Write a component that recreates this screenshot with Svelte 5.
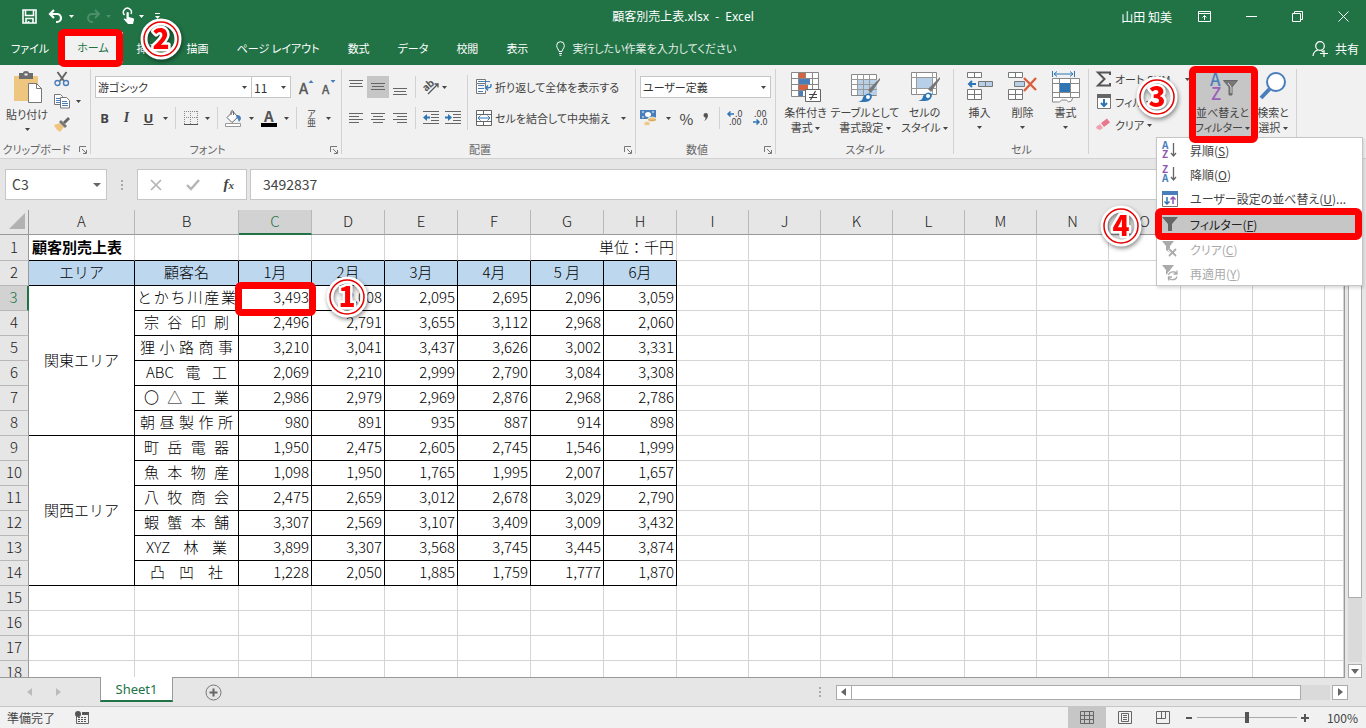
<script>
  const months = ['1月', '2月', '3月', '4月', '5 月', '6月'];
  const columns = 'ABCDEFGHIJKLMNOPQ'.split('');
  const spare = columns.slice(8);
  const customers = [
    ['とかち川産業', 'six', ['3,493', '2,008', '2,095', '2,695', '2,096', '3,059']],
    ['宗谷印刷', 'four', ['2,496', '2,791', '3,655', '3,112', '2,968', '2,060']],
    ['狸小路商事', 'five', ['3,210', '3,041', '3,437', '3,626', '3,002', '3,331']],
    ['ABC電工', 'mixed', ['2,069', '2,210', '2,999', '2,790', '3,084', '3,308']],
    ['〇△工業', 'four', ['2,986', '2,979', '2,969', '2,876', '2,968', '2,786']],
    ['朝昼製作所', 'five', ['980', '891', '935', '887', '914', '898']],
    ['町岳電器', 'four', ['1,950', '2,475', '2,605', '2,745', '1,546', '1,999']],
    ['魚本物産', 'four', ['1,098', '1,950', '1,765', '1,995', '2,007', '1,657']],
    ['八牧商会', 'four', ['2,475', '2,659', '3,012', '2,678', '3,029', '2,790']],
    ['蝦蟹本舗', 'four', ['3,307', '2,569', '3,107', '3,409', '3,009', '3,432']],
    ['XYZ林業', 'mixed', ['3,899', '3,307', '3,568', '3,745', '3,445', '3,874']],
    ['凸凹社', 'three', ['1,228', '2,050', '1,885', '1,759', '1,777', '1,870']]
  ];
  const areas = { 0: '関東エリア', 6: '関西エリア' };
  const blankRows = [15, 16, 17, 18];
  let formula = $state('3492837');
  let zoom = $state(50);
</script>

{#snippet caret()}
  <svg class="caret" width="5" height="3" viewBox="0 0 5 3" aria-hidden="true"><path d="M0 0h5L2.500 3z" fill="currentColor" /></svg>
{/snippet}

{#snippet badge(n, where)}
  <svg class="badge {where}" width="48" height="48" viewBox="0 0 48 48" aria-hidden="true">
    <circle cx="24" cy="24" r="17" fill="none" stroke="#fff" stroke-width="7" />
    <circle cx="24" cy="24" r="17" fill="none" stroke="#e60000" stroke-width="1.500" />
    <text x="24" y="34" text-anchor="middle">{n}</text>
  </svg>
{/snippet}

{#snippet launcher()}
  <svg class="launcher" width="8" height="8" viewBox="0 0 8 8" aria-hidden="true"><path d="M.5 6V.5H7M3 3l4 4M7.500 4v3.500H4" fill="none" stroke="#777" /></svg>
{/snippet}

{#snippet lines(rows)}
  <svg width="16" height="16" viewBox="0 0 16 16" aria-hidden="true">
    {#each rows as [x, y, w]}<path d="M{x} {y + 0.5}h{w}" stroke="#666" />{/each}
  </svg>
{/snippet}

{#snippet sortIcon(top, bottom, topColor, bottomColor)}
  <svg width="16" height="18" viewBox="0 0 16 18" aria-hidden="true">
    <text x="0" y="8" font-size="10" font-weight="700" fill={topColor}>{top}</text>
    <text x="0" y="17" font-size="10" font-weight="700" fill={bottomColor}>{bottom}</text>
    <path d="M11.500 2v13M9 12l2.500 3L14 12" fill="none" stroke="#666" stroke-width="1.300" />
  </svg>
{/snippet}

<div class="app">
  <header class="green">
    <div class="title">
      <div class="quick">
        <button aria-label="上書き保存"><svg width="15" height="15" viewBox="0 0 15 15"><path d="M1 1h13v13H1zM3.500 1v5.500h8V1M4 14v-4.500h7V14M6.500 14v-2" fill="none" stroke="#fff" stroke-width="1.600" /></svg></button>
        <button aria-label="元に戻す"><svg width="16" height="14" viewBox="0 0 16 14"><path d="M6 1L2 5l4 4M2 5h7a4 4 0 0 1 0 8H8" fill="none" stroke="#fff" stroke-width="2.200" /></svg>{@render caret()}</button>
        <button class="dim" aria-label="やり直し"><svg width="16" height="14" viewBox="0 0 16 14"><path d="M10 1l4 4-4 4M14 5H7a4 4 0 0 0 0 8h1" fill="none" stroke="#4d8f6a" stroke-width="2" /></svg>{@render caret()}</button>
        <button aria-label="タッチ/マウス モード"><svg width="12" height="17" viewBox="0 0 12 17"><path d="M2.500 7A4 4 0 1 1 9 6" fill="none" stroke="#fff" stroke-width="1.500" /><path d="M4.500 4.500q1.200-1.200 2.300 0V9l4.500 1.200q1 .4.700 1.500L11 16H6L1.500 11q.8-1.300 3 .3z" fill="#fff" /></svg>{@render caret()}</button>
        <button aria-label="ユーザー設定"><svg width="5" height="7" viewBox="0 0 5 7"><path d="M0 .5h5" stroke="#fff" /><path d="M0 3h5L2.500 6z" fill="#fff" /></svg></button>
      </div>
      <h1>顧客別売上表.xlsx&nbsp; -&nbsp; Excel</h1>
      <div class="window">
        <span>山田 知美</span>
        <button aria-label="リボンの表示オプション"><svg width="13" height="11" viewBox="0 0 13 11"><path d="M.5.5h12v10H.500zM.5 2.500h12M6.500 9V4.500M4.500 6.500l2-2 2 2" fill="none" stroke="#fff" /></svg></button>
        <button aria-label="最小化"><svg width="11" height="11" viewBox="0 0 11 11"><path d="M0 5.500h11" stroke="#fff" /></svg></button>
        <button aria-label="元に戻す (縮小)"><svg width="11" height="11" viewBox="0 0 11 11"><path d="M.5 2.500h8v8h-8zM2.500 2V.5h8v8H9" fill="none" stroke="#fff" /></svg></button>
        <button aria-label="閉じる"><svg width="11" height="11" viewBox="0 0 11 11"><path d="M.5.500l10 10M10.500.5l-10 10" fill="none" stroke="#fff" /></svg></button>
      </div>
    </div>
    <nav class="tabs">
      <button>ファイル</button>
      <button class="active">ホーム<i class="frame tab-frame"></i></button>
      <button>挿入{@render badge(2, 'on-tab')}</button>
      <button>描画</button>
      <button>ページ レイアウト</button>
      <button>数式</button>
      <button>データ</button>
      <button>校閲</button>
      <button>表示</button>
      <button class="tell"><svg width="9" height="15" viewBox="0 0 9 15"><path d="M3 10.500C3 8.500.7 7.500.7 4.500a3.800 3.800 0 0 1 7.600 0c0 3-2.300 4-2.300 6zM3 12.500h3M3.500 14.300h2" fill="none" stroke="#fff" /></svg>実行したい作業を入力してください</button>
      <button class="share"><svg width="17" height="16" viewBox="0 0 17 16"><circle cx="8" cy="5" r="4.300" fill="none" stroke="#fff" stroke-width="1.200" /><path d="M1 15q.5-5 5-6M9.500 9.500l1.500 1.500M8 12.500h8M12 9v7" fill="none" stroke="#fff" stroke-width="1.200" /></svg>共有</button>
    </nav>
  </header>

  <div class="ribbon">
    <section class="group clipboard">
      <div class="body">
        <button class="big"><svg width="32" height="34" viewBox="0 0 32 34"><path d="M3 5h24v25H3z" fill="#eec67f" /><path d="M8 2h4q0-2 3-2t3 2h4v6H8z" fill="#6d6d6d" /><path d="M13.500 2.500h3v2h-3z" fill="#f1f1f1" /><path d="M17.500 12.500h8l5 5v14h-13z" fill="#fff" stroke="#777" /><path d="M25.500 12.500v5h5" fill="none" stroke="#777" /></svg><span>貼り付け</span>{@render caret()}</button>
        <div class="stack">
          <button class="small" aria-label="切り取り"><svg width="16" height="16" viewBox="0 0 16 16"><path d="M3.500 1l6.500 9M12.500 1L6 10" stroke="#666" stroke-width="2" /><circle cx="3.500" cy="12" r="2.500" fill="none" stroke="#4a7ebb" stroke-width="1.400" /><circle cx="12" cy="12" r="2.500" fill="none" stroke="#4a7ebb" stroke-width="1.400" /></svg></button>
          <button class="small" aria-label="コピー"><svg width="16" height="15" viewBox="0 0 16 15"><path d="M.5.500h6l2 2v8h-8z" fill="#fff" stroke="#777" /><path d="M2 4.500h4M2 6.500h4M2 8.500h4" stroke="#4a7ebb" /><path d="M6.500 3.500h6l3 3v7.500h-9z" fill="#fff" stroke="#777" /><path d="M8 7.500h5M8 9.500h6M8 11.500h6" stroke="#4a7ebb" /></svg>{@render caret()}</button>
          <button class="small" aria-label="書式のコピー/貼り付け"><svg width="16" height="15" viewBox="0 0 16 15"><path d="M0 8l6-2 4 4-4 5q-4-2-6-7z" fill="#eec67f" /><path d="M5 5l2-2 6 6-2 2z" fill="#777" /><path d="M9 5l5-5 2 2-5 5z" fill="#666" /></svg></button>
        </div>
      </div>
      <footer>クリップボード{@render launcher()}</footer>
    </section>

    <section class="group font">
      <div class="body rows">
        <div class="row">
          <label class="combo family"><select aria-label="フォント"><option>游ゴシック</option></select>{@render caret()}</label>
          <label class="combo size"><select aria-label="フォント サイズ"><option>11</option></select>{@render caret()}</label>
          <button class="grow" aria-label="フォント サイズの拡大"><svg width="15" height="17" viewBox="0 0 15 17"><text x="0" y="15" font-size="15" fill="#555" stroke="#555" stroke-width=".4">A</text><path d="M9.500 4h5L12 1z" fill="#4a7ebb" /></svg></button>
          <button class="grow" aria-label="フォント サイズの縮小"><svg width="15" height="17" viewBox="0 0 15 17"><text x="0" y="15" font-size="12" fill="#555" stroke="#555" stroke-width=".4">A</text><path d="M8.500 1h5L11 4z" fill="#4a7ebb" /></svg></button>
        </div>
        <div class="row marks">
          <button class="glyph"><b>B</b></button>
          <button class="glyph"><i>I</i></button>
          <button class="glyph"><u>U</u></button>{@render caret()}
          <hr />
          <button aria-label="罫線"><svg width="14" height="14" viewBox="0 0 14 14"><path d="M0 .5h14M.5 0v13M13.500 0v13M6.500 0v13M0 6.500h14" stroke="#888" stroke-dasharray="1 1" /><path d="M0 13.500h14" stroke="#555" /></svg></button>{@render caret()}
          <hr />
          <button aria-label="塗りつぶしの色"><svg width="17" height="17" viewBox="0 0 17 17"><path d="M2 7.500l6-6L13 7l-6 5.500z" fill="#fff" stroke="#666" /><path d="M6 5V1.500q1-2 2.500 0V5" fill="none" stroke="#666" /><path d="M12 5q4 0 4 4l-2 3q-1-4-3-5z" fill="#4a7ebb" /><path d="M.5 13.500h15v3H.500z" fill="#fff" stroke="#999" /></svg></button>{@render caret()}
          <button aria-label="フォントの色"><svg width="16" height="17" viewBox="0 0 16 17"><text x="3" y="12" font-size="15" font-weight="700" fill="#555">A</text><path d="M0 13h16v4H0z" fill="#000" /></svg></button>{@render caret()}
          <hr />
          <button class="ruby" aria-label="ふりがなの表示"><span>ア</span><span>亜</span></button>{@render caret()}
        </div>
      </div>
      <footer>フォント{@render launcher()}</footer>
    </section>

    <section class="group align">
      <div class="body">
        <div class="rows">
          <div class="row icons">
            <button aria-label="上揃え">{@render lines([[1, 1, 14], [2, 4, 12], [1, 7, 14]])}</button>
            <button class="on" aria-label="上下中央揃え">{@render lines([[1, 4, 14], [2, 7, 12], [1, 10, 14]])}</button>
            <button aria-label="下揃え">{@render lines([[1, 9, 14], [2, 12, 12], [1, 15, 14]])}</button>
            <hr />
            <button aria-label="方向"><svg width="17" height="16" viewBox="0 0 17 16"><text x="1" y="10" font-size="10" font-weight="700" fill="#555" transform="rotate(-42 6 9)">ab</text><path d="M5 15L15 5M11.500 5H15v3.500" fill="none" stroke="#555" stroke-width="1.300" /></svg></button>{@render caret()}
          </div>
          <div class="row icons">
            <button aria-label="左揃え">{@render lines([[1, 3, 14], [1, 6, 10], [1, 9, 14], [1, 12, 10]])}</button>
            <button aria-label="中央揃え">{@render lines([[1, 3, 14], [3, 6, 10], [1, 9, 14], [3, 12, 10]])}</button>
            <button aria-label="右揃え">{@render lines([[1, 3, 14], [5, 6, 10], [1, 9, 14], [5, 12, 10]])}</button>
            <hr />
            <button aria-label="インデントを減らす"><svg width="17" height="14" viewBox="0 0 17 14"><path d="M0 .5h16M8 3.500h8M8 6.500h8M8 9.500h8M0 12.500h16" stroke="#666" /><path d="M0 6.500L4 3v2.500h3v2H4V10z" fill="#2e75b6" /></svg></button>
            <button aria-label="インデントを増やす"><svg width="17" height="14" viewBox="0 0 17 14"><path d="M0 .5h16M8 3.500h8M8 6.500h8M8 9.500h8M0 12.500h16" stroke="#666" /><path d="M7 6.500L3 3v2.500H0v2h3V10z" fill="#2e75b6" /></svg></button>
          </div>
        </div>
        <hr class="tall" />
        <div class="rows wide">
          <button class="item"><svg width="16" height="16" viewBox="0 0 16 16"><path d="M.5.500h9v4h-9zM.5 4.500v10h9v-3M9.500 4.500V8" fill="#fff" stroke="#777" /><path d="M2 2.500h12M2 6.500h6M2 9.500h6M2 12.500h5" stroke="#4a7ebb" /><path d="M15 5v2q0 2-5 2M12 6.500L9.500 9l2.500 2.500" fill="none" stroke="#2e75b6" stroke-width="1.300" /></svg>折り返して全体を表示する</button>
          <button class="item"><svg width="16" height="16" viewBox="0 0 16 16"><path d="M.5.500h15v15H.500zM.5 4.500h15M.5 11.500h15M7.500.5v4M7.500 11.500v4" fill="#fff" stroke="#666" /><path d="M2 8h12M4.500 5.500L2 8l2.500 2.500M11.500 5.500L14 8l-2.500 2.500" fill="none" stroke="#2e75b6" /></svg>セルを結合して中央揃え<span class="end">{@render caret()}</span></button>
        </div>
      </div>
      <footer>配置{@render launcher()}</footer>
    </section>

    <section class="group number">
      <div class="body rows">
        <div class="row"><label class="combo format"><select aria-label="表示形式"><option>ユーザー定義</option></select>{@render caret()}</label></div>
        <div class="row nums">
          <button aria-label="通貨表示形式"><svg width="17" height="16" viewBox="0 0 17 16"><path d="M0 0h16v9H0z" fill="#4a7ebb" /><ellipse cx="8" cy="4.500" rx="3" ry="2.500" fill="#fff" /><path d="M2 2h2M12 2h2M2 7h2" stroke="#fff" /><path d="M8 8q4-2 8 0v3q-4 2-8 0zM4 12q3-1 6 0v3q-3 1-6 0z" fill="#eec67f" stroke="#f1f1f1" stroke-width=".8" /><path d="M8 9.700q4 1.500 8 0" fill="none" stroke="#d0a050" /></svg></button>{@render caret()}
          <button class="percent">%</button>
          <button aria-label="桁区切りスタイル"><svg width="8" height="12" viewBox="0 0 8 12"><path d="M2 1.500q4-2 4 2.500-1 4-4 5 2-2 1.500-3.500-3-.5-1.500-4z" fill="#555" /></svg></button>
          <hr />
          <button aria-label="小数点以下の表示桁数を増やす"><svg width="16" height="16" viewBox="0 0 16 16"><text x="7" y="7" font-size="9" fill="#444">.0</text><text x="1" y="15" font-size="9" fill="#444">.00</text><path d="M6 4H0M2.500 1.500L0 4l2.500 2.500" fill="none" stroke="#2e75b6" stroke-width="1.500" /></svg></button>
          <button aria-label="小数点以下の表示桁数を減らす"><svg width="16" height="16" viewBox="0 0 16 16"><text x="1" y="7" font-size="9" fill="#444">.00</text><text x="7" y="15" font-size="9" fill="#444">.0</text><path d="M0 12h6M3.500 9.500L6 12l-2.500 2.500" fill="none" stroke="#2e75b6" stroke-width="1.500" /></svg></button>
        </div>
      </div>
      <footer>数値{@render launcher()}</footer>
    </section>

    <section class="group styles">
      <div class="body">
        <button class="big"><svg width="32" height="32" viewBox="0 0 32 32"><path d="M1.500 1.500h27v24h-27z" fill="#fff" stroke="#888" /><path d="M8.500 1v24M22.500 1v24M1 7.500h28M1 13.500h28M1 19.500h28M15.500 1v24" stroke="#888" /><path d="M9 2h6v5H9zM9 14h9v5H9z" fill="#d9603f" /><path d="M9 8h11v5H9zM9 20h4v5H9z" fill="#4a7ebb" /><path d="M15.500 18.500h15v12h-15z" fill="#fff" stroke="#666" /><path d="M19 23.500h8M19 26.500h8M25.500 20l-5 9" stroke="#444" stroke-width="1.200" /></svg><span>条件付き</span><span>書式 {@render caret()}</span></button>
        <button class="big"><svg width="32" height="32" viewBox="0 0 32 32"><path d="M2.500 3.500h25v21h-25z" fill="#fff" stroke="#888" /><path d="M9 9h19v15H9z" fill="#b8cfe8" /><path d="M8.500 3v21M14.500 3v21M20.500 3v21M2 8.500h26M2 13.500h26M2 18.500h26" stroke="#999" /><path d="M31 9l-9 13-3-3L31 7z" fill="#777" /><path d="M9 31q5-1 5-5 5-6 9-2 0 7-7 7z" fill="#2e75b6" /><circle cx="19" cy="26" r="2" fill="#fff" /></svg><span>テーブルとして</span><span>書式設定 {@render caret()}</span></button>
        <button class="big"><svg width="32" height="32" viewBox="0 0 32 32"><path d="M2.500 1.500h25v22h-25z" fill="#fff" stroke="#888" /><path d="M7.500 1v23M23.500 1v23M2 6.500h26M2 17.500h26" stroke="#999" /><path d="M8 7h15v10H8z" fill="#b8cfe8" /><path d="M31 8l-9 13-3-3L31 6z" fill="#777" /><path d="M9 30q5-1 5-5 5-6 9-2 0 7-7 7z" fill="#2e75b6" /><circle cx="19" cy="25" r="2" fill="#fff" /></svg><span>セルの</span><span>スタイル {@render caret()}</span></button>
      </div>
      <footer>スタイル</footer>
    </section>

    <section class="group cells">
      <div class="body">
        <button class="big"><svg width="28" height="32" viewBox="0 0 28 32"><path d="M1.500 1.500h14v5h-14zM8.500 1.500v5M1.500 18.500h14v10h-14zM8.500 18.500v10M1.500 23.500h14" fill="#fff" stroke="#777" /><path d="M12.500 10.500h14v5h-14z" fill="#b8cfe8" stroke="#777" /><path d="M19.500 10.500v5" stroke="#777" /><path d="M10 13H3M6 10l-3 3 3 3" fill="none" stroke="#2e75b6" stroke-width="2" /></svg><span>挿入</span>{@render caret()}</button>
        <button class="big"><svg width="32" height="32" viewBox="0 0 32 32"><path d="M1.500 1.500h14v5h-14zM8.500 1.500v5M1.500 18.500h14v10h-14zM8.500 18.500v10M1.500 23.500h14" fill="#fff" stroke="#777" /><path d="M7.500 10.500h10v5h-10z" fill="#b8cfe8" stroke="#777" /><path d="M17 7l12 12M29 7L17 20" fill="none" stroke="#d9603f" stroke-width="2.400" /></svg><span>削除</span>{@render caret()}</button>
        <button class="big"><svg width="30" height="32" viewBox="0 0 30 32"><path d="M1.500 0v6M23.500 0v6M3 3h19M6 .5L3 3l3 2.500M19 .5L22 3l-3 2.500" fill="none" stroke="#2e75b6" /><path d="M1.500 7.500h27v19h-27zM8.500 7v20M19.500 7v20M1 12.500h27M1 21.500h27" fill="#fff" stroke="#888" /><path d="M9 12h10v9H9z" fill="#2e75b6" /><path d="M1.500 27v4h7l2-2h5l2 2q4 0 4-4" fill="#fff" stroke="#888" /></svg><span>書式</span>{@render caret()}</button>
      </div>
      <footer>セル</footer>
    </section>

    <section class="group edit">
      <div class="body">
        <div class="list">
          <button class="item"><svg width="16" height="16" viewBox="0 0 16 16"><path d="M14 4V1.500H2L8.500 8 2 14.500h12V12" fill="none" stroke="#555" stroke-width="2" /></svg>オート SUM<span class="end">{@render caret()}</span></button>
          <button class="item"><svg width="16" height="16" viewBox="0 0 16 16"><path d="M1.500 1.500h13v13h-13z" fill="#fff" stroke="#777" /><path d="M1 0h14v4H1z" fill="#666" /><path d="M8 5v7M5 9l3 3 3-3" fill="none" stroke="#2e75b6" stroke-width="2" /></svg>フィル {@render caret()}{@render badge(3, 'on-fill')}</button>
          <button class="item"><svg width="16" height="16" viewBox="0 0 16 16"><path d="M5 6l6-4.500 3 4-6 4.500z" fill="#e8798c" /><path d="M4 7l3 4-3 2-3-1-1-2z" fill="#f0a3af" /></svg>クリア {@render caret()}</button>
        </div>
        <div class="sort">
          <button class="big" aria-expanded="true"><svg width="32" height="32" viewBox="0 0 32 32"><text x="3" y="15" font-size="17" font-weight="500" fill="#4a7ebb">A</text><text x="4" y="29" font-size="17" font-weight="500" fill="#9a5fb8">Z</text><path d="M16.500 9.500h14L25 16v8h-3v-8z" fill="#777" stroke="#666" /><path d="M21 12l3 4v6" fill="none" stroke="#ddd" /></svg><span>並べ替えと</span><span>フィルター {@render caret()}</span></button>
          <div class="menu" role="menu">
            <button role="menuitem">{@render sortIcon('A', 'Z', '#4a7ebb', '#8f55b0')}<span>昇順(<u>S</u>)</span></button>
            <button role="menuitem">{@render sortIcon('Z', 'A', '#8f55b0', '#4a7ebb')}<span>降順(<u>O</u>)</span></button>
            <button role="menuitem"><svg width="16" height="16" viewBox="0 0 16 16"><path d="M.5.500h15v15H.500z" fill="#fff" stroke="#777" /><path d="M0 0h16v4H0z" fill="#4a7ebb" /><path d="M5 6v7M2.500 10.500L5 13l2.500-2.500" fill="none" stroke="#2e75b6" stroke-width="1.500" /><path d="M11 13V6M8.500 8.500L11 6l2.500 2.500" fill="none" stroke="#8f55b0" stroke-width="1.500" /></svg><span>ユーザー設定の並べ替え(<u>U</u>)...</span></button>
            <button role="menuitem" class="hot"><svg width="16" height="16" viewBox="0 0 16 16"><path d="M0 1h16L10 8v7H6V8z" fill="#666" /></svg><span>フィルター(<u>F</u>)</span><i class="frame menu-frame"></i>{@render badge(4, 'on-menu')}</button>
            <button role="menuitem" disabled><svg width="16" height="16" viewBox="0 0 16 16"><path d="M0 0h12L8 5v7L4 9V5z" fill="#aaa" /><path d="M7 8l8 7M14 8l-7 7" stroke="#fff" stroke-width="4" /><path d="M7 8l7 7M14 8l-7 7" stroke="#aaa" stroke-width="1.800" /></svg><span>クリア(<u>C</u>)</span></button>
            <button role="menuitem" disabled><svg width="16" height="16" viewBox="0 0 16 16"><path d="M0 0h12L8 5v7L4 9V5z" fill="#aaa" /><circle cx="10.500" cy="10.500" r="5.500" fill="#fff" /><path d="M6.500 10q1-4 6.500-3l2 2M15 5.500V9h-3.500M15 11.500q-1 4-6.500 3l-2-2M6.500 15.500V12H10" fill="none" stroke="#aaa" stroke-width="1.300" /></svg><span>再適用(<u>Y</u>)</span></button>
          </div>
          <i class="frame sort-frame"></i>
        </div>
        <button class="big find"><svg width="30" height="32" viewBox="0 0 30 32"><circle cx="18" cy="11" r="9" fill="#fff" stroke="#4a7ebb" stroke-width="2" /><path d="M11.500 18L3 27" stroke="#4a7ebb" stroke-width="4" /></svg><span>検索と</span><span>選択 {@render caret()}</span></button>
      </div>
      <footer></footer>
    </section>
  </div>

  <div class="formula">
    <label class="name"><input aria-label="名前ボックス" value="C3" /><svg width="8" height="4" viewBox="0 0 8 4"><path d="M0 0h8L4 4z" fill="#666" /></svg></label>
    <svg class="dots" width="2" height="10" viewBox="0 0 2 10"><path d="M0 0h2v2H0zM0 4h2v2H0zM0 8h2v2H0z" fill="#aaa" /></svg>
    <div class="fx">
      <button aria-label="キャンセル"><svg width="12" height="12" viewBox="0 0 12 12"><path d="M1 1l10 10M11 1L1 11" stroke="#b5b5b5" stroke-width="1.700" /></svg></button>
      <button aria-label="入力"><svg width="14" height="12" viewBox="0 0 14 12"><path d="M1 6l4 4 8-9" fill="none" stroke="#b5b5b5" stroke-width="2.400" /></svg></button>
      <button class="fn" aria-label="関数の挿入"><i>f<small>x</small></i></button>
    </div>
    <input class="value" aria-label="数式バー" bind:value={formula} />
  </div>

  <main>
    <div class="sheet">
      <table>
        <colgroup>
          <col class="c-head" /><col class="c-area" /><col class="c-name" />
          {#each months as m}<col class="c-month" />{/each}
          {#each spare as c}<col class="c-spare" />{/each}
          <col />
        </colgroup>
        <thead>
          <tr><th class="corner"><svg width="18" height="18" viewBox="0 0 18 18"><path d="M17 1v16H1z" fill="#b2b2b2" /></svg></th>
            {#each columns as c}<th class:picked={c === 'C'}>{c}</th>{/each}<th></th></tr>
        </thead>
        <tbody>
          <tr class="first"><th>1</th><td class="heading">顧客別売上表</td><td></td><td></td><td></td><td></td><td></td><td class="unit" colspan="2">単位：千円</td>{#each spare as c}<td></td>{/each}<td></td></tr>
          <tr class="labels"><th>2</th><td>エリア</td><td>顧客名</td>{#each months as m}<td>{m}</td>{/each}{#each spare as c}<td class="plain"></td>{/each}<td class="plain"></td></tr>
          {#each customers as [name, fit, values], r}
            <tr class="data">
              <th class:picked={r === 0}>{r + 3}</th>
              {#if areas[r]}<td class="area" rowspan="6">{areas[r]}</td>{/if}
              <td class="name-cell {fit}">{name}</td>
              {#each values as v, c}
                <td class="num">{v}{#if r === 0 && c === 0}<i class="frame cell-frame"></i>{/if}{#if r === 0 && c === 1}{@render badge(1, 'on-cell')}{/if}</td>
              {/each}
              {#each spare as c}<td class="plain"></td>{/each}<td class="plain"></td>
            </tr>
          {/each}
          {#each blankRows as r}
            <tr><th>{r}</th>{#each columns as c}<td></td>{/each}<td></td></tr>
          {/each}
        </tbody>
      </table>
    </div>
    <div class="vbar">
      <div class="vthumb"></div>
      <div class="vtrack"></div>
      <button aria-label="下へスクロール"><svg width="8" height="5" viewBox="0 0 8 5"><path d="M0 0h8L4 5z" fill="#666" /></svg></button>
    </div>
  </main>

  <div class="sheets">
    <div class="nav"><svg width="5" height="8" viewBox="0 0 5 8"><path d="M5 0v8L0 4z" fill="#bbb" /></svg><svg width="5" height="8" viewBox="0 0 5 8"><path d="M0 0v8l5-4z" fill="#bbb" /></svg></div>
    <button class="sheet-tab">Sheet1</button>
    <button class="add" aria-label="新しいシート"><svg width="17" height="17" viewBox="0 0 17 17"><circle cx="8.500" cy="8.500" r="7.500" fill="none" stroke="#777" /><path d="M4.500 8.500h8M8.500 4.500v8" stroke="#666" stroke-width="2" /></svg></button>
    <svg class="dots" width="2" height="10" viewBox="0 0 2 10"><path d="M0 0h2v2H0zM0 4h2v2H0zM0 8h2v2H0z" fill="#aaa" /></svg>
    <div class="hbar">
      <button aria-label="左へスクロール"><svg width="5" height="8" viewBox="0 0 5 8"><path d="M5 0v8L0 4z" fill="#666" /></svg></button>
      <div class="hthumb"></div><div class="htrack"></div>
      <button aria-label="右へスクロール"><svg width="5" height="8" viewBox="0 0 5 8"><path d="M0 0v8l5-4z" fill="#666" /></svg></button>
    </div>
  </div>

  <div class="status">
    <span>準備完了</span>
    <svg width="14" height="13" viewBox="0 0 14 13"><path d="M1.500 5v7.500h12v-11H7" fill="none" stroke="#666" /><circle cx="3" cy="3" r="3" fill="#555" /><path d="M7 1h7v3H7z" fill="#555" /><path d="M3 6.500h9M3 8.500h9M3 10.500h9" stroke="#555" stroke-dasharray="2 1" /></svg>
    <div class="views">
      <button class="on" aria-label="標準"><svg width="14" height="13" viewBox="0 0 14 13"><path d="M.5.500h13v12H.500zM4.500 0v13M9.500 0v13M0 4.500h14M0 8.500h14" fill="none" stroke="#666" /></svg></button>
      <button aria-label="ページ レイアウト表示"><svg width="14" height="13" viewBox="0 0 14 13"><path d="M.5.500h13v12H.500zM3.500 2.500h7v8h-7zM5 4.500h4M5 6.500h4M5 8.500h4" fill="none" stroke="#666" /></svg></button>
      <button aria-label="改ページ プレビュー"><svg width="14" height="13" viewBox="0 0 14 13"><path d="M.5.500h13v12H.500zM.5 7.500h9v-7M5.500.5v7" fill="none" stroke="#666" /></svg></button>
    </div>
    <button class="step" aria-label="縮小"><svg width="8" height="8" viewBox="0 0 8 8"><path d="M1 4h6" stroke="#555" stroke-width="2" /></svg></button>
    <input type="range" aria-label="ズーム" bind:value={zoom} />
    <button class="step" aria-label="拡大"><svg width="8" height="8" viewBox="0 0 8 8"><path d="M0 4h8M4 0v8" stroke="#555" stroke-width="2" /></svg></button>
    <span class="pct">100%</span>
  </div>
</div>

<style>
  :global(body) { margin: 0; }
  * { box-sizing: border-box; }
  .app {
    display: flex; flex-direction: column; height: 100vh; overflow: hidden;
    font-family: "Noto Sans CJK JP", sans-serif; font-size: 12px; line-height: 15px;
    font-feature-settings: "palt"; color: #444; background: #e6e6e6; white-space: nowrap;
  }
  button, input, select { font: inherit; color: inherit; font-feature-settings: inherit; background: none; border: 0; padding: 0; margin: 0; border-radius: 0; }
  button { display: flex; align-items: center; justify-content: center; white-space: nowrap; }
  svg { display: block; flex: none; overflow: visible; }
  hr { border: 0; width: 1px; height: 22px; margin: 0; background: #d2d2d2; flex: none; }
  .caret { display: inline-block; vertical-align: middle; }
  .frame { position: absolute; border: 7px solid #f00; border-radius: 6px; pointer-events: none; z-index: 5; }
  .badge { position: absolute; z-index: 6; filter: drop-shadow(1px 2px 2px rgba(0, 0, 0, 0.45)); pointer-events: none; }
  .badge text { fill: #f00; stroke: #fff; stroke-width: 5px; stroke-linejoin: round; paint-order: stroke fill; font: 900 28px "Noto Sans CJK JP", sans-serif; }

  .green { background: #217346; color: #fff; flex: none; }
  .title { display: grid; grid-template-columns: 1fr auto 1fr; align-items: center; height: 32px; }
  .quick { display: flex; align-items: center; gap: 11px; padding-left: 22px; }
  .quick button { gap: 5px; }
  .quick .dim { color: #4d8f6a; }
  h1 { margin: 0; font: 12px/15px "Noto Sans", "Noto Sans CJK JP", sans-serif; font-feature-settings: normal; }
  .window { display: flex; align-items: center; justify-content: flex-end; gap: 35px; padding-right: 17px; }
  .window span { margin-right: -9px; }
  .tabs { display: flex; height: 33px; font-size: 11px; }
  .tabs button { position: relative; padding: 0 14px; }
  .tabs button:first-child { padding-left: 11px; }
  .tabs .active { background: #f1f1f1; color: #217346; margin-bottom: 2px; }
  .tab-frame { inset: -3px 0 -4px -5px; }
  .on-tab { left: 14px; top: -17px; }
  .tabs .tell { gap: 7px; color: #e3efe8; }
  .tabs .share { margin-left: auto; gap: 6px; padding-right: 7px; font-size: 12px; }

  .ribbon { display: flex; flex: none; height: 94px; background: #f1f1f1; border-bottom: 1px solid #d2d2d2; font-size: 11px; }
  .group { position: relative; display: flex; flex-direction: column; flex: none; }
  .group::after { content: ""; position: absolute; right: 0; top: 4px; bottom: 4px; width: 1px; background: #d2d2d2; }
  .body { display: flex; height: 76px; padding-top: 6px; }
  .group footer { display: flex; align-items: center; justify-content: center; height: 16px; color: #666; }
  .launcher { position: absolute; right: 4px; bottom: 4px; }
  .clipboard { width: 91px; }
  .clipboard footer { padding-right: 18px; }
  .font { width: 251px; }
  .font footer { padding-right: 18px; }
  .align { width: 294px; }
  .align footer, .number footer { padding-right: 18px; }
  .number { width: 140px; }
  .styles { width: 178px; }
  .cells { width: 135px; }
  .edit { width: 208px; }
  .big { flex-direction: column; justify-content: flex-start; width: 60px; }
  .big svg:first-child { margin-bottom: 2px; }
  .big > .caret { margin-top: 6px; }
  .clipboard .big { width: 54px; }
  .stack { display: flex; flex-direction: column; gap: 8px; }
  .stack button { justify-content: flex-start; gap: 6px; height: 15px; }
  .rows { display: flex; flex-direction: column; gap: 9px; padding-top: 11px; }
  .row { display: flex; align-items: center; height: 22px; }
  .font .row, .number .row { padding-left: 4px; }
  .combo { position: relative; display: flex; background: #fff; border: 1px solid #c6c6c6; height: 22px; }
  .combo select { appearance: none; width: 100%; padding: 0 16px 0 2px; color: #333; }
  .combo .caret { position: absolute; right: 4px; top: 9px; }
  .family { width: 157px; }
  .size { width: 40px; margin-left: -1px; margin-right: 4px; font-size: 12px; }
  .format { width: 131px; }
  .grow { width: 23px; }
  .font .marks { gap: 7px; padding-left: 6px; }
  .marks button { min-width: 15px; }
  .glyph { font: 700 14px "Liberation Serif", serif; }
  .glyph b { font: 700 13px "Noto Sans", sans-serif; }
  .glyph u { font: 700 13px "Noto Sans", sans-serif; }
  .ruby { flex-direction: column; font-size: 9px; line-height: 9px; }
  .icons { padding-left: 3px; }
  .icons button { width: 22px; height: 22px; }
  .icons hr { margin: 0 4px; }
  .on { background: #c6c6c6; }
  .align .body { padding-top: 0; }
  .tall { height: 55px; margin-top: 10px; }
  .icons { width: 125px; }
  .wide { flex: 1; padding-left: 8px; }
  .item { position: relative; justify-content: flex-start; gap: 3px; height: 22px; }
  .end { margin-left: auto; padding-right: 10px; display: flex; }
  .nums { justify-content: space-between; padding-right: 7px; }
  .percent { font-size: 15px; }
  .cells .body { padding-left: 4px; }
  .cells .big { width: 43px; }
  .list { width: 103px; padding-left: 7px; margin-top: -3px; }
  .list .item { width: 100%; height: 24px; margin-top: -1px; }
  .list .end { padding-right: 2px; }
  .on-fill { left: 37px; top: -17px; }
  .sort { position: relative; }
  .sort .big { width: 61px; height: 70px; background: #c6c6c6; }
  .sort-frame { inset: -5px -5px -2px -3px; }
  .find { width: 40px; }
  .menu { position: absolute; z-index: 4; left: -36px; top: 66px; width: 207px; background: #fff; border: 1px solid #c6c6c6; box-shadow: 1px 2px 3px rgba(0, 0, 0, 0.15); font-size: 12px; }
  .menu button { position: relative; justify-content: flex-start; gap: 12px; width: 100%; height: 24px; padding-left: 5px; }
  .menu button:nth-child(3) { height: 25px; }
  .menu .hot { background: #c6c6c6; height: 26px; color: #222; }
  .menu button:disabled { color: #aaa; }
  .menu-frame { inset: -3px 0 -3px -2px; }
  .on-menu { left: -60px; top: -9px; }

  .formula { display: flex; align-items: center; flex: none; height: 51px; padding: 0 4px 0 5px; font-size: 14px; }
  .name { display: flex; align-items: center; width: 102px; height: 31px; padding: 0 5px 0 6px; background: #fff; border: 1px solid #c6c6c6; }
  .name input { flex: 1; min-width: 0; }
  .formula .dots { margin: 0 14px; }
  .fx { display: flex; align-items: center; justify-content: space-around; width: 110px; height: 31px; background: #fff; border: 1px solid #c6c6c6; margin-right: 3px; }
  .fn { font: 700 15px "Liberation Serif", serif; }
  .fn small { font-size: 11px; }
  .value { flex: 1; height: 31px; padding: 0 12px 2px; background: #fff; border: 1px solid #c6c6c6; }

  main { display: flex; flex: 1; min-height: 0; }
  .sheet { flex: 1; min-width: 0; overflow: hidden; background: #fff; border-right: 1px solid #999; border-bottom: 1px solid #999; font-feature-settings: normal; }
  table { width: 100%; table-layout: fixed; border-collapse: separate; border-spacing: 0; font-size: 15px; line-height: 20px; font-weight: 300; color: #000; }
  .c-head { width: 29px; }
  .c-area { width: 106px; }
  .c-name { width: 104px; }
  .c-month { width: 73px; }
  .c-spare { width: 72px; }
  th, td { height: 25px; padding: 0 0 2px; border-right: 1px solid #d4d4d4; border-bottom: 1px solid #d4d4d4; font-weight: inherit; }
  th { background: #e6e6e6; color: #222; border-color: #b8b8b8; }
  thead th { border-bottom-color: #999; }
  tbody th, .corner { border-right-color: #999; }
  .corner svg { margin-left: 8px; }
  th.picked { background: #d2d2d2; color: #217346; }
  thead .picked { border-bottom: 2px solid #217346; }
  tbody .picked { border-right: 2px solid #217346; }
  .first th, .first td { height: 26px; }
  .first td:nth-child(-n + 8) { border-bottom-color: #000; }
  .first .heading { padding-left: 3px; font-weight: 700; }
  .first .unit { text-align: right; padding-right: 2px; }
  .labels td, .data td { border-color: #000; }
  .labels td { background: #bdd7ee; text-align: center; }
  .labels .plain, .data .plain { border-color: #d4d4d4; background: #fff; }
  .area { text-align: center; }
  .num { position: relative; text-align: right; padding-right: 2px; }
  .name-cell { text-align: justify; text-align-last: justify; }
  .six { padding: 0 2px 2px; }
  .five { padding: 0 5px 2px; }
  .four { padding: 0 9px 2px; }
  .mixed { padding: 0 11px 2px; }
  .three { padding: 0 15px 2px; }
  .cell-frame { inset: -4px -5px -6px -4px; }
  .on-cell { left: 11px; top: -13px; }

  .vbar { display: flex; flex-direction: column; width: 21px; padding: 0 4px 0 3px; }
  .vthumb { flex: 388; background: #fff; border: 1px solid #ababab; }
  .vtrack { flex: 64; background: #dadada; margin-bottom: 2px; }
  .vbar button { height: 14px; background: #fff; border: 1px solid #ababab; }

  .sheets { display: flex; align-items: center; flex: none; height: 28px; }
  .nav { display: flex; gap: 24px; width: 100px; padding-left: 27px; }
  .sheet-tab { align-self: flex-start; width: 73px; height: 25px; margin-top: -1px; background: #fff; color: #217346; font: 13px "Noto Sans", sans-serif; border: 1px solid #999; border-top: 0; border-bottom: 2px solid #217346; }
  .add { margin-left: 32px; }
  .sheets > .dots { margin-left: auto; margin-right: 15px; }
  .hbar { display: flex; width: 37.5%; height: 15px; margin-right: 18px; }
  .hbar button { width: 16px; background: #fff; border: 1px solid #ababab; }
  .hthumb { flex: 450; background: #fff; border: 1px solid #ababab; margin-left: -1px; }
  .htrack { flex: 29; background: #dadada; margin-right: 2px; }

  .status { display: flex; align-items: center; flex: none; height: 22px; padding: 0 8px 0 7px; background: #f1f1f1; border-top: 1px solid #c6c6c6; }
  .status > svg { margin-left: 20px; }
  .views { display: flex; align-self: stretch; margin-left: auto; margin-right: 1px; }
  .views button { width: 38px; }
  .step { width: 8px; margin: 0 2px; }
  input[type="range"] { appearance: none; width: 100px; height: 12px; margin: 0 2px; background: linear-gradient(#aaa, #aaa) center / 100% 1px no-repeat; }
  input[type="range"]::-webkit-slider-thumb { appearance: none; width: 4px; height: 11px; background: #555; }
  .pct { width: 34px; margin-left: 13px; text-align: right; }
</style>
